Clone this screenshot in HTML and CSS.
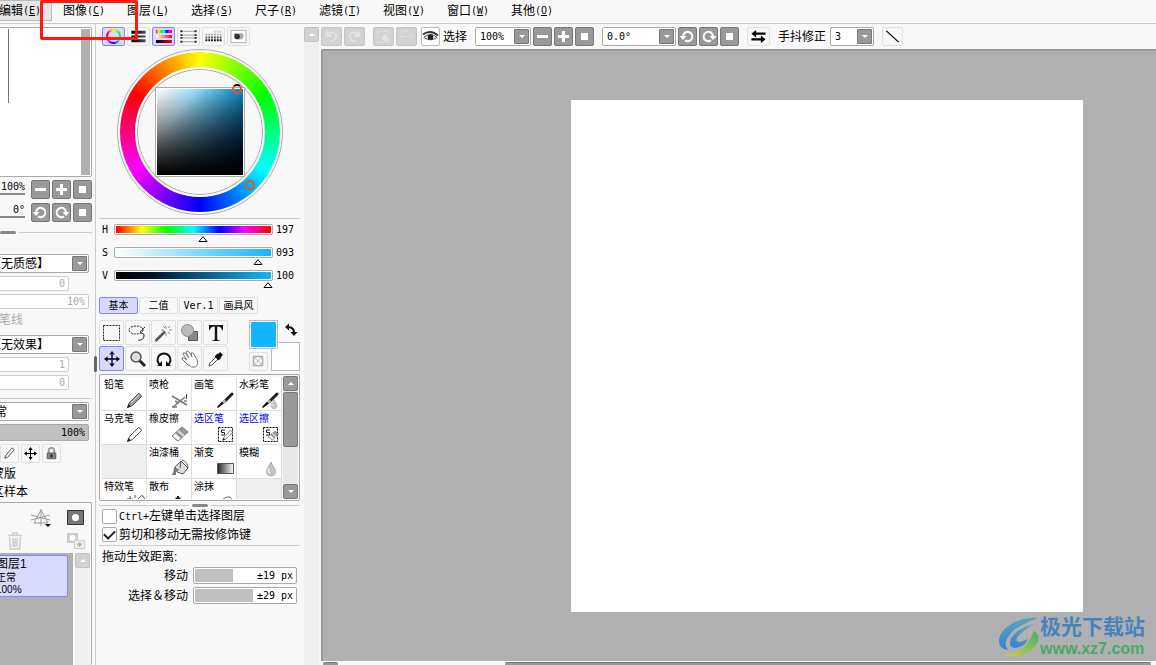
FILE: index.html
```html
<!DOCTYPE html>
<html lang="zh-CN">
<head>
<meta charset="utf-8">
<title>绘图软件</title>
<link rel="stylesheet" href="styles.css">
</head>
<body>
<svg class="defs" aria-hidden="true">
  <symbol id="i-minus" viewBox="0 0 17 17"><path d="M3 7h11v3H3z" fill="#fff"/></symbol>
  <symbol id="i-plus" viewBox="0 0 17 17"><path d="M3 7h4V3h3v4h4v3h-4v4H7v-4H3z" fill="#fff"/></symbol>
  <symbol id="i-square" viewBox="0 0 17 17"><path d="M5 5h7v7H5z" fill="#fff"/></symbol>
  <symbol id="i-cw" viewBox="0 0 17 17"><path d="M13 8.500A4.700 4.700 0 1 0 11 12.400" fill="none" stroke="#fff" stroke-width="2"/><path d="M9.500 8h7L13 12z" fill="#fff"/></symbol>
  <symbol id="i-ccw" viewBox="0 0 17 17"><path d="M4 8.500A4.700 4.700 0 1 1 6 12.400" fill="none" stroke="#fff" stroke-width="2"/><path d="M.5 8h7L4 12z" fill="#fff"/></symbol>
  <symbol id="i-move" viewBox="0 0 18 18"><path d="M9 2v14M2 9h14" stroke="currentColor" stroke-width="1.500"/><path d="M9 0l3 4H6zM9 18l3-4H6zM0 9l4-3v6zM18 9l-4-3v6z" fill="currentColor"/></symbol>
  <symbol id="i-brush" viewBox="0 0 20 20"><path d="M17 4L10 11" stroke="#222" stroke-width="3" stroke-linecap="round"/><path d="M10.500 10.500L8.500 12.500" stroke="#aaa" stroke-width="3"/><path d="M9 13.500L3 18l-1-1 5-5.500z" fill="#111"/></symbol>
  <symbol id="i-pencil" viewBox="0 0 20 20"><path d="M2.500 17.500l2-5 9-9q2 0 3 3l-9 9z" fill="#f4f4f4" stroke="#555"/><path d="M2 18l1.500-4 2.500 2.500z" fill="#222"/></symbol>
  <symbol id="i-lead" viewBox="0 0 20 20"><path d="M2.500 17.500l2-5 9-9q2 0 3 3l-9 9z" fill="#999" stroke="#555"/><path d="M6 13l8-8" stroke="#ddd"/><path d="M2 18l1.500-4 2.500 2.500z" fill="#222"/></symbol>
  <symbol id="i-eraser" viewBox="0 0 20 20"><path d="M2 12L12 3l6 5-10 9z" fill="#999" stroke="#777"/><path d="M2 12l3.500-3 6 5L8 17z" fill="#f5f5f5" stroke="#888"/><path d="M8 7l6 5" stroke="#ddd" stroke-width="2"/></symbol>
  <symbol id="i-drop" viewBox="0 0 20 20"><path d="M11 4c1 4 4.500 6 4.500 9.500a4.500 4.500 0 0 1-9 0c0-3.500 3.500-5.500 4.500-9.500z" fill="#c4c4c4" stroke="#aaa"/><path d="M9 10c-1 2-1 4 1 5" stroke="#eee" stroke-width="1.500" fill="none"/></symbol>
  <symbol id="i-sel" viewBox="0 0 20 20"><path d="M3.500 3.500h14v14h-14z" fill="none" stroke="#000" stroke-dasharray="2 1"/><path d="M10 6H6.500v2.500h3V11H6" fill="none" stroke="#222"/></symbol>
</svg>

<nav class="menubar">
  <button class="menu on">编辑<span class="la">(<u>E</u>)</span></button>
  <button class="menu">图像<span class="la">(<u>C</u>)</span></button>
  <button class="menu">图层<span class="la">(<u>L</u>)</span></button>
  <button class="menu">选择<span class="la">(<u>S</u>)</span></button>
  <button class="menu">尺子<span class="la">(<u>R</u>)</span></button>
  <button class="menu">滤镜<span class="la">(<u>T</u>)</span></button>
  <button class="menu">视图<span class="la">(<u>V</u>)</span></button>
  <button class="menu">窗口<span class="la">(<u>W</u>)</span></button>
  <button class="menu">其他<span class="la">(<u>O</u>)</span></button>
</nav>

<main class="workspace">
  <aside class="layers">
    <div class="layers-inner">
      <div class="navigator"><div class="nav-line"></div><div class="nav-shade"></div></div>
      <div class="nav-row"><span class="val">100%</span><button class="dk" aria-label="缩小"><svg><use href="#i-minus"/></svg></button><button class="dk" aria-label="放大"><svg><use href="#i-plus"/></svg></button><button class="dk" aria-label="重置"><svg><use href="#i-square"/></svg></button></div>
      <div class="nav-row"><span class="val">0°</span><button class="dk" aria-label="左转"><svg><use href="#i-ccw"/></svg></button><button class="dk" aria-label="右转"><svg><use href="#i-cw"/></svg></button><button class="dk" aria-label="重置角度"><svg><use href="#i-square"/></svg></button></div>
      <div class="grab left-grab"><i class="pill"></i><i class="rule"></i></div>
      <div class="group first">
        <label class="drop"><select class="deep" aria-label="质感"><option>【无质感】</option></select><i class="arrow"></i></label>
        <input class="num short" value="0" disabled aria-label="质感倍率">
        <input class="num" value="10%" disabled aria-label="质感强度">
        <span class="faint">笔线</span>
      </div>
      <div class="group">
        <label class="drop"><select class="deep" aria-label="效果"><option>【无效果】</option></select><i class="arrow"></i></label>
        <input class="num short" value="1" disabled aria-label="效果宽度">
        <input class="num short" value="0" disabled aria-label="效果强度">
      </div>
      <hr>
      <div class="group mode">
        <label class="drop"><select aria-label="模式"><option>正常</option></select><i class="arrow"></i></label>
        <input class="num full" value="100%" aria-label="不透明度">
      </div>
      <div class="locks">
        <button class="lt sq" aria-label="画笔"><svg viewBox="0 0 18 18"><path d="M4 14l1-3 7-8 2 2-7 8z" fill="#fff" stroke="#444"/></svg></button>
        <button class="lt sq" aria-label="移动"><svg class="small"><use href="#i-move"/></svg></button>
        <button class="lt sq" aria-label="锁定"><svg viewBox="0 0 18 18"><path d="M6 9V6a3 3 0 0 1 6 0v3" fill="none" stroke="#999" stroke-width="2"/><path d="M4.500 8.500h9v6h-9z" fill="#888" stroke="#555"/><path d="M9 10v3" stroke="#111" stroke-width="2"/></svg></button>
      </div>
      <div class="opt">蒙版</div>
      <div class="opt">区样本</div>
      <section class="layer-panel">
        <div class="layer-tools">
          <button class="bare" aria-label="透视尺"><svg width="20" height="20" viewBox="0 0 20 20"><path d="M10 1v17M0 7l19 5M19 7L0 12M10 2l-7 13 14 0z" fill="none" stroke="#999"/><path d="M14 16h6l-3 3z" fill="#000"/></svg></button>
          <button class="bare" aria-label="蒙版"><svg width="18" height="16" viewBox="0 0 18 16"><path d="M.5.5h16v14H.5z" fill="#777" stroke="#333"/><circle cx="8.500" cy="7.500" r="3.500" fill="#fff"/></svg></button>
        </div>
        <div class="layer-tools low">
          <button class="bare" aria-label="删除"><svg width="16" height="18" viewBox="0 0 16 18"><path d="M1 3.500h14M6 3V1h4v2M2.500 5l1 12h9l1-12M6 6v9M8 6v9M10 6v9" fill="none" stroke="#ccc" stroke-width="1.500"/></svg></button>
          <button class="bare" aria-label="应用蒙版"><svg width="20" height="18" viewBox="0 0 20 18"><path d="M1 1h11v10H1z" fill="#ccc"/><circle cx="6.500" cy="6" r="3" fill="#fff"/><path d="M8.500 8.500h10v8h-10z" fill="#f3f3f3" stroke="#ccc"/><path d="M13.500 10v5M11 12.500h5" stroke="#bbb" stroke-width="2"/></svg></button>
        </div>
        <div class="layer-list">
          <div class="list-body"><button class="layer"><b>图层1</b><span>正常</span><span>100%</span></button></div>
          <div class="track"><button class="sb pale up" aria-label="向上"></button></div>
        </div>
      </section>
    </div>
    <i class="handle"></i>
  </aside>

  <section class="tools">
    <div class="panel-tabs">
      <button class="lt on" aria-label="色环"><span class="hue-dot"></span></button>
      <button class="lt" aria-label="RGB滑块"><svg viewBox="0 0 21 18"><path d="M3 3h15v3H3zM3 8h15v2H3zM3 12h15v3H3z" fill="url(#gk)"/><defs><linearGradient id="gk"><stop offset="0"/><stop offset=".5" stop-color="#222"/><stop offset="1" stop-color="#555"/></linearGradient></defs></svg></button>
      <button class="lt on" aria-label="HSV滑块"><span class="hsv-icon"><i class="rainbow"></i><i class="wr"></i><i class="kr"></i></span></button>
      <button class="lt" aria-label="中间色"><svg viewBox="0 0 21 18"><path d="M2 3.500h17M2 7.500h17M2 10.500h17M2 14.500h17" stroke="#999"/><path d="M2 3.500h2M2 7.500h2M2 10.500h2M2 14.500h2M17 3.500h2M17 7.500h2M17 10.500h2M17 14.500h2" stroke="#222" stroke-width="2"/></svg></button>
      <button class="lt" aria-label="色板"><svg viewBox="0 0 21 18"><g stroke-dasharray="2 1" stroke-width="2"><path d="M11 4h8" stroke="#ccc"/><path d="M2 7h17" stroke="#aaa"/><path d="M2 10h17" stroke="#555"/><path d="M2 13h17" stroke="#111"/></g></svg></button>
      <button class="lt" aria-label="便签"><svg viewBox="0 0 21 18"><path d="M2.500 2.500h16v13h-16z" fill="#fff" stroke="#aaa"/><path d="M5 7q2-3 5-1 4-2 6 1 0 5-3 5-5 1-6-4z" fill="#aaa"/><circle cx="9" cy="9" r="3" fill="#333"/></svg></button>
    </div>
    <div class="wheel">
      <div class="hue"></div>
      <div class="hole"></div>
      <div class="sv"></div>
      <i class="mark m1"></i><i class="mark m2"></i>
    </div>
    <hr>
    <div class="sliders">
      <label class="slide"><span>H</span><input class="h" type="range" max="359" value="197"><output>197</output></label>
      <label class="slide"><span>S</span><input class="s" type="range" max="100" value="93"><output>093</output></label>
      <label class="slide"><span>V</span><input class="v" type="range" max="100" value="100"><output>100</output></label>
    </div>
    <div class="set-tabs">
      <button class="lt on">基本</button><button class="lt">二值</button><button class="lt la">Ver.1</button><button class="lt">画具风</button>
    </div>
    <div class="toolbox">
      <div class="tool-grid">
        <button class="lt" aria-label="矩形选区"><svg viewBox="0 0 22 22"><path d="M2.500 3.500h16v15h-16z" fill="none" stroke="#222" stroke-dasharray="2 1"/></svg></button>
        <button class="lt" aria-label="套索"><svg viewBox="0 0 22 22"><ellipse cx="9" cy="8" rx="7" ry="4" fill="none" stroke="#222" stroke-dasharray="2 1"/><path d="M18 5c-3 3-6 5-4 6s3 0 3 3-4 5-6 4" fill="none" stroke="#222"/></svg></button>
        <button class="lt" aria-label="魔棒"><svg viewBox="0 0 22 22"><path d="M2.500 19L12 9.500" stroke="#555" stroke-width="2.500"/><path d="M13 4v3M13 11v3M8 8h3M16 8h3M10 4l2 2M17 4l-2 2M17 12l-2-2" stroke="#888"/></svg></button>
        <button class="lt" aria-label="图形"><svg viewBox="0 0 22 22"><path d="M9.500 9.500h9v9h-9z" fill="#888" stroke="#555"/><circle cx="8.500" cy="8.500" r="6" fill="#bbb" stroke="#888"/></svg></button>
        <button class="lt" aria-label="文字"><svg viewBox="0 0 22 22"><path d="M4 3h14v5h-1q-.5-3-3-3.500h-1.800V17q0 1.500 2.800 1.500v.5H7v-.5q2.800 0 2.800-1.500V4.500H8Q5.500 5 5 8H4z" fill="#111"/></svg></button>
        <button class="lt on" aria-label="移动"><svg viewBox="0 0 22 22"><use href="#i-move" x="3" y="3" width="16" height="16"/></svg></button>
        <button class="lt" aria-label="缩放"><svg viewBox="0 0 22 22"><path d="M12 12l6 6" stroke="#222" stroke-width="3"/><circle cx="9" cy="9" r="5" fill="#ddd" stroke="#555" stroke-width="1.500"/></svg></button>
        <button class="lt" aria-label="旋转"><svg viewBox="0 0 22 22"><path d="M7 17A6.500 6.500 0 1 1 15 17" fill="none" stroke="#111" stroke-width="2"/><path d="M4 18h5v-5zM18 18h-5v-5z" fill="#111"/></svg></button>
        <button class="lt" aria-label="抓手"><svg viewBox="0 0 22 22"><path d="M9 17L3 11q0-2 2-1l3 2-4-6q0-2 2-1l4 5-3-6q1-2 3 0l3 5-1-4q2-1 3 1l3 6q2 5-2 7-4 1-6-2z" fill="#fff" stroke="#777"/></svg></button>
        <button class="lt" aria-label="吸管"><svg viewBox="0 0 22 22"><path d="M4 18l1-3 7-7 2 2-7 7z" fill="#fff" stroke="#555"/><path d="M11 7l4 4M13 9l3.500-3.500" stroke="#111" stroke-width="4"/></svg></button>
      </div>
      <div class="swatches">
        <button class="back" aria-label="背景色"></button>
        <button class="front" aria-label="前景色"></button>
        <button class="bare swap" aria-label="交换颜色"><svg width="14" height="14" viewBox="0 0 14 14"><path d="M4 4q6 0 6 6" fill="none" stroke="#111" stroke-width="2"/><path d="M1 4l4-3.500v7zM6.500 9h7L10 13z" fill="#111"/></svg></button>
        <button class="lt clear" aria-label="透明"><svg viewBox="0 0 18 18"><path d="M3.500 3.500h10v10h-10z" fill="#fff" stroke="#888"/><path d="M4 4h3v3H4zM10 4h3v3h-3zM7 7h3v3H7zM4 10h3v3H4zM10 10h3v3h-3z" fill="#ccc"/></svg></button>
      </div>
    </div>
    <div class="brushes">
      <div class="brush-grid">
        <button class="brush">铅笔<svg><use href="#i-lead"/></svg></button>
        <button class="brush">喷枪<svg viewBox="0 0 20 20"><path d="M2 6l15 9M3 17l12-10M5 11l4 2M2 17h5" fill="none" stroke="#777" stroke-width="1.500"/><path d="M16.500 4v5M14 11h3" stroke="#444"/></svg></button>
        <button class="brush">画笔<svg><use href="#i-brush"/></svg></button>
        <button class="brush">水彩笔<svg viewBox="0 0 20 20"><use href="#i-brush"/><use href="#i-drop" x="7" y="7" width="13" height="13"/></svg></button>
        <button class="brush">马克笔<svg><use href="#i-pencil"/></svg></button>
        <button class="brush">橡皮擦<svg><use href="#i-eraser"/></svg></button>
        <button class="brush blue">选区笔<svg viewBox="0 0 20 20"><use href="#i-sel"/><use href="#i-pencil" x="6" y="4" width="14" height="14"/></svg></button>
        <button class="brush blue">选区擦<svg viewBox="0 0 20 20"><use href="#i-sel"/><use href="#i-eraser" x="7" y="5" width="13" height="13"/></svg></button>
        <span class="brush none"></span>
        <button class="brush">油漆桶<svg viewBox="0 0 20 20"><path d="M5 9l6-6 7 7-5 6-6-2z" fill="#ddd" stroke="#555"/><path d="M11 3l-1 7M12 2q6 2 6 8" fill="none" stroke="#555"/><path d="M4 9l6 3-4 1v4H1q3-1 3-8z" fill="#777"/></svg></button>
        <button class="brush">渐变<svg viewBox="0 0 20 20"><defs><linearGradient id="gr"><stop offset="0" stop-color="#222"/><stop offset="1" stop-color="#fff"/></linearGradient></defs><path d="M2.500 5.500h16v10h-16z" fill="url(#gr)" stroke="#555"/></svg></button>
        <button class="brush">模糊<svg><use href="#i-drop"/></svg></button>
        <button class="brush">特效笔<svg viewBox="0 0 20 20"><use href="#i-pencil" x="3"/><path d="M5 4v6M2 7h6M10 3v3" stroke="#555"/></svg></button>
        <button class="brush">散布<svg viewBox="0 0 20 20"><path d="M8 4v5M5.500 6.500h5" stroke="#222" stroke-width="2"/><path d="M12 8h6v5h-6z" fill="#222"/></svg></button>
        <button class="brush">涂抹<svg viewBox="0 0 20 20"><path d="M4 12q5-8 11-7 4 3-2 7" fill="#fff" stroke="#666"/></svg></button>
        <span class="brush none"></span>
      </div>
      <div class="brush-scroll"><button class="sb up" aria-label="向上"></button><i class="thumb"></i><button class="sb down" aria-label="向下"></button></div>
    </div>
    <div class="grab"><i class="rule"></i><i class="pill"></i><i class="rule"></i></div>
    <div class="checks">
      <label><input type="checkbox"><span><span class="la">Ctrl+</span>左键单击选择图层</span></label>
      <label><input type="checkbox" checked><span>剪切和移动无需按修饰键</span></label>
    </div>
    <hr>
    <div class="drag">
      <p>拖动生效距离:</p>
      <label>移动<input class="px" value="±19 px" style="--fill:38px"></label>
      <label>选择＆移动<input class="px" value="±29 px" style="--fill:58px"></label>
    </div>
  </section>

  <div class="track side"><button class="sb pale up" aria-label="向上"></button></div>

  <section class="stage">
    <div class="toolbar">
      <button class="off" disabled aria-label="撤销"><svg viewBox="0 0 19 17"><path d="M5 7q5-5 9 0 1 4-3 6H8" fill="none" stroke="#e2e2e2" stroke-width="2"/><path d="M4 2v7h7z" fill="#e2e2e2"/></svg></button>
      <button class="off" disabled aria-label="重做"><svg viewBox="0 0 19 17"><path d="M14 7q-5-5-9 0-1 4 3 6h3" fill="none" stroke="#e2e2e2" stroke-width="2"/><path d="M15 2v7H8z" fill="#e2e2e2"/></svg></button>
      <button class="off gap5" disabled aria-label="取消选择"><svg viewBox="0 0 19 17"><path d="M3.500 3.500h11v11h-11z" fill="none" stroke="#e2e2e2" stroke-dasharray="2 1"/><path d="M7 10l4-4 4 6-3 2z" fill="#e2e2e2"/></svg></button>
      <button class="off" disabled aria-label="反选"><svg viewBox="0 0 19 17"><path d="M2 8.500h15M4 7q5-8 11 0M4 10q5 8 11 0" fill="none" stroke="#e2e2e2" stroke-dasharray="3 1"/></svg></button>
      <label class="eye"><button class="lt" aria-label="显示选区"><svg viewBox="0 0 18 18"><path d="M2 10q7-6 14 0-7 5-14 0z" fill="#fff" stroke="#444"/><circle cx="9" cy="9.500" r="3" fill="#222"/><path d="M1 7q8-6 16 1" fill="none" stroke="#333" stroke-width="2"/></svg></button>选择</label>
      <label class="drop zoom"><select aria-label="缩放"><option>100%</option></select><i class="arrow"></i></label>
      <div class="trio"><button class="dk" aria-label="缩小"><svg><use href="#i-minus"/></svg></button><button class="dk" aria-label="放大"><svg><use href="#i-plus"/></svg></button><button class="dk" aria-label="重置"><svg><use href="#i-square"/></svg></button></div>
      <label class="drop angle"><select aria-label="角度"><option>0.0°</option></select><i class="arrow"></i></label>
      <div class="trio"><button class="dk" aria-label="左转"><svg><use href="#i-ccw"/></svg></button><button class="dk" aria-label="右转"><svg><use href="#i-cw"/></svg></button><button class="dk" aria-label="重置角度"><svg><use href="#i-square"/></svg></button></div>
      <button class="lt flip" aria-label="翻转"><svg viewBox="0 0 21 18"><path d="M6 6h12M3 12h12" stroke="#000" stroke-width="2.500"/><path d="M3 6l5-4v8zM18 12l-5-4v8z" fill="#000"/></svg></button>
      <label class="stab">手抖修正<span class="drop"><select><option>3</option></select><i class="arrow"></i></span></label>
      <button class="lt line" aria-label="直线"><svg viewBox="0 0 19 18"><path d="M3 3l13 12" stroke="#000" stroke-width="1.300"/></svg></button>
    </div>
    <div class="canvas">
      <div class="paper"></div>
      <div class="brand">
        <svg width="42" height="40" viewBox="0 0 42 40"><defs><linearGradient id="b1" x2="0" y2="1"><stop offset="0" stop-color="#62a0b8"/><stop offset="1" stop-color="#2f86d4"/></linearGradient><linearGradient id="b2" x1="0" y1="1" x2="1" y2="0"><stop offset="0" stop-color="#d2cf45"/><stop offset="1" stop-color="#43b06a"/></linearGradient></defs><path d="M40 1C22-1 1 11 1 24q0 8 9 9-5-6 0-13C16 11 26 6 40 1z" fill="url(#b1)"/><path d="M36 7C24 10 13 17 12 25q-1 8 9 5 7-2 9-9-4 4-9 4-5-1 0-7 6-6 15-11z" fill="url(#b1)"/><path d="M36 14q8 5 2 14C31 39 16 41 5 38q14 0 22-9 6-7 9-15z" fill="url(#b2)"/></svg>
        <div><strong>极光下载站</strong><em>www.xz7.com</em></div>
      </div>
    </div>
    <div class="hscroll"><i class="hbtn"></i><i class="hthumb"></i></div>
  </section>
</main>
<div class="callout"></div>
</body>
</html>
```

FILE: styles.css
```css
* { box-sizing: border-box; }
body {
  margin: 0;
  height: 100vh;
  display: flex;
  flex-direction: column;
  overflow: hidden;
  background: #f8f8f8;
  color: #000;
  font: 12px/14px "Liberation Sans", "Noto Sans CJK SC", sans-serif;
}
button, input, select { font: inherit; color: inherit; margin: 0; padding: 0; }
button { display: flex; align-items: center; justify-content: center; flex: none; }
hr { margin: 0; border: 0; border-top: 1px solid #ccc; }
i, em { font-style: normal; }
.defs { position: absolute; width: 0; height: 0; }
.la, .val, .num, .px, output { font-family: "DejaVu Sans Mono", monospace; font-size: 10px; }

/* menu */
.menubar { display: flex; flex: none; height: 24px; margin-left: -12px; border-bottom: 1px solid #ccc; }
.menu { width: 64px; height: 21px; padding-top: 1px; border: 0; background: none; white-space: nowrap; }
.menu.on { background: #e6e6e6; border: 1px solid #bbb; }

/* shared controls */
.dk { width: 19px; height: 19px; background: #999; border: 1px solid #777; border-radius: 2px; }
.dk svg { width: 17px; height: 17px; }
.lt { background: #f8f8f8; border: 1px solid #e0e0e0; border-radius: 2px; }
.lt svg { width: 100%; height: 100%; }
.lt.on { background: #d8d8ff; border-color: #8484ff; }
.bare { border: 0; background: none; }
.drop { position: relative; display: block; }
.drop select {
  display: block;
  width: 100%;
  height: 19px;
  appearance: none;
  background: #fff;
  border: 1px solid #aaa;
  border-radius: 2px;
  padding-left: 10px;
}
.drop .arrow {
  position: absolute;
  right: 2px;
  top: 2px;
  width: 15px;
  height: 15px;
  display: grid;
  place-items: center;
  background: #999;
  border: 1px solid #777;
  border-radius: 1px;
  pointer-events: none;
}
.arrow::after { content: ""; border: 3px solid transparent; border-top-color: #fff; border-bottom: 0; }
.sb { width: 15px; height: 15px; background: #999; border: 1px solid #777; border-radius: 2px; }
.sb.pale { background: #d2d2d2; border-color: #c0c0c0; }
.sb::after { content: ""; border: 3px solid transparent; }
.sb.up::after { border-bottom-color: #fff; border-top: 0; }
.sb.down::after { border-top-color: #fff; border-bottom: 0; }
.track { width: 15px; background: #efefef; flex: none; }
.pill { width: 16px; height: 3px; border-radius: 2px; background: #888; }
.rule { flex: 1; height: 1px; background: #ccc; }
.grab { display: flex; align-items: center; gap: 3px; }

.workspace { flex: 1; display: flex; min-height: 0; }

/* layer column */
.layers {
  position: relative;
  width: 96px;
  flex: none;
  display: flex;
  justify-content: flex-end;
  border-right: 1px solid #ccc;
  clip-path: inset(0 -4px 0 0);
}
.layers-inner { width: 120px; flex: none; margin-right: 3px; padding-top: 3px; display: flex; flex-direction: column; }
.handle { position: absolute; right: -2px; top: 332px; width: 3px; height: 16px; border-radius: 2px; background: #666; }
.navigator { height: 150px; flex: none; display: flex; justify-content: space-between; background: #fff; border: 1px solid #aaa; border-radius: 2px; padding: 1px; }
.nav-line { width: 1px; height: 74px; margin-left: 34px; background: #777; }
.nav-shade { width: 9px; background: #b0b0b0; }
.nav-row { display: flex; justify-content: flex-end; gap: 2px; height: 19px; margin-top: 3px; }
.nav-row + .nav-row { margin-top: 4px; }
.nav-row .val { width: 40px; height: 15px; margin-right: 4px; border-bottom: 2px solid #888; text-align: right; }
.left-grab { padding-left: 28px; margin-top: 9px; }
.group { display: flex; flex-direction: column; gap: 3px; padding-right: 3px; }
.group.first { margin: 20px 0 7px; }
.drop .deep { padding-left: 16px; }
.num { height: 15px; width: 100%; background: #fff; border: 1px solid #ccc; border-radius: 2px; color: #aaa; text-align: right; padding-right: 3px; }
.num.short { width: 97px; }
.num.full { height: 17px; background: #c0c0c0; color: #000; border-color: #aaa; }
.faint { color: #aaa; line-height: 16px; padding-left: 27px; }
.layers hr { margin: 8px 0 3px; }
.locks { display: flex; gap: 2px; padding-left: 28px; margin: 3px 0 2px; }
.sq { width: 19px; height: 19px; }
.locks .small { width: 13px; height: 13px; }
.opt { height: 18px; line-height: 18px; padding-left: 20px; }
.layer-panel { flex: 1; min-height: 0; margin-top: 1px; display: flex; flex-direction: column; border: 1px solid #aaa; border-bottom: 0; border-radius: 2px; }
.layer-tools { display: flex; justify-content: space-between; height: 24px; margin: 3px 6px 0 58px; flex: none; }
.layer-tools.low { height: 22px; margin: 0 5px 1px 34px; }
.layer-list { flex: 1; display: flex; gap: 2px; min-height: 0; padding-right: 1px; }
.list-body { flex: 1; background: #b0b0b0; padding: 2px 5px 0 0; }
.layer { width: 100%; height: 42px; flex-direction: column; align-items: flex-start; background: #dadaff; border: 1px solid #8484ff; border-radius: 2px; padding-left: 22px; font-size: 10px; line-height: 12px; }
.layer b { font-weight: 400; font-size: 12px; line-height: 15px; }

/* colour and tool column */
.tools { width: 208px; flex: none; padding: 3px 4px 0 3px; }
.panel-tabs { display: flex; gap: 2px; padding-left: 3px; }
.panel-tabs .lt { width: 23px; height: 19px; }
.hue-dot { width: 15px; height: 15px; border-radius: 50%; background: radial-gradient(#d8d8ff 5px, transparent 6px), conic-gradient(yellow, lime, cyan, blue, magenta, red, yellow); }
.hsv-icon { display: grid; gap: 2px; width: 16px; }
.hsv-icon i { height: 3px; }
.rainbow { background: linear-gradient(90deg, red, yellow, lime, cyan, blue, magenta, red); }
.wr { background: linear-gradient(90deg, #fff, red); }
.kr { background: linear-gradient(90deg, #000, red); }
.wheel { position: relative; width: 166px; height: 166px; margin: 3px auto; border: 1px solid #aaa; border-radius: 50%; background: #fff; }
.hue { position: absolute; inset: 2px; border-radius: 50%; background: conic-gradient(yellow, lime, cyan, blue, magenta, red, yellow); }
.hole { position: absolute; inset: 17px; border-radius: 50%; border: 2px solid #fff; background: #f8f8f8; box-shadow: inset 0 0 0 1px #aaa; }
.sv {
  position: absolute;
  inset: 37px;
  border: 1px solid #aaa;
  padding: 1px;
  background:
    linear-gradient(to top, #000, transparent) content-box,
    linear-gradient(to top left, #002c 10%, #0014 50%, transparent 75%) content-box,
    linear-gradient(90deg, #fff, #12b7ff) content-box,
    #fff;
}
.mark { position: absolute; width: 10px; height: 10px; border: 2px solid #e8501c; border-radius: 50%; }
.m1 { left: 114px; top: 34px; border-top-color: #111; }
.m2 { left: 127px; top: 130px; }
.sliders { padding: 4px 3px 0; }
.slide { display: flex; align-items: flex-start; gap: 3px; height: 23px; font-family: "DejaVu Sans Mono", monospace; font-size: 10px; line-height: 13px; }
.slide span { width: 9px; }
.slide input { width: 159px; height: 11px; margin-top: 1px; appearance: none; background: none; }
.slide input::-webkit-slider-runnable-track { height: 11px; border: 1px solid #aaa; border-radius: 2px; padding: 1px; background: var(--g) content-box, #fff; }
.slide input::-webkit-slider-thumb {
  appearance: none;
  width: 10px;
  height: 6px;
  margin: 10px 0 0 2px;
  background: url("data:image/svg+xml,%3Csvg xmlns='http://www.w3.org/2000/svg' viewBox='0 0 10 6'%3E%3Cpath d='M5 .7L9 5.500H1z' fill='%23fff' stroke='%23000'/%3E%3C/svg%3E") no-repeat;
}
.h { --g: linear-gradient(90deg, red, yellow, lime, cyan, blue, magenta, red); }
.s { --g: linear-gradient(90deg, #fff, #12b7ff); }
.v { --g: linear-gradient(90deg, #000, #000c20 20%, #12b7ff); }
.set-tabs { display: flex; gap: 1px; margin: 5px 0 6px; }
.set-tabs .lt { width: 39px; height: 17px; font-size: 10px; line-height: 14px; }
.toolbox { display: flex; justify-content: space-between; }
.tool-grid { display: grid; grid-template-columns: repeat(5, 25px); grid-auto-rows: 25px; gap: 1px; }
.tool-grid svg { width: 22px; height: 22px; }
.swatches { position: relative; width: 51px; height: 51px; }
.front { position: absolute; left: 0; top: 0; width: 29px; height: 29px; background: #12b7ff; border: 1px solid #bbb; box-shadow: inset 0 0 0 1px #fff; }
.back { position: absolute; right: 0; bottom: 0; width: 29px; height: 29px; background: #fff; border: 1px solid #bbb; }
.swap { position: absolute; right: 2px; top: 3px; }
.clear { position: absolute; left: 0; bottom: 0; width: 19px; height: 19px; }
.brushes { display: flex; justify-content: space-between; height: 127px; margin-top: 3px; padding: 1px; border: 1px solid #aaa; border-radius: 2px; }
.brush-grid { display: grid; grid-template-columns: repeat(4, 45px); grid-auto-rows: 34px; overflow: hidden; margin: 1px 0 0 1px; }
.brush {
  position: relative;
  display: flex;
  align-items: flex-start;
  justify-content: flex-start;
  background: #fff;
  border: 0;
  border-right: 1px solid #ddd;
  border-bottom: 1px solid #ddd;
  padding: 2px 0 0 2px;
  font-size: 10px;
  line-height: 12px;
}
.brush svg { position: absolute; right: 1px; bottom: 0; width: 20px; height: 20px; }
.brush.none { background: #efefef; }
.blue { color: #00f; }
.brush-scroll { width: 15px; display: flex; flex-direction: column; gap: 1px; background: #e8e8e8; }
.thumb { height: 55px; background: #999; border: 1px solid #777; border-radius: 2px; }
.brush-scroll .down { margin-top: auto; }
.tools .grab { height: 3px; margin: 3px 0 2px; }
.checks { display: grid; gap: 3px; padding-left: 3px; margin-bottom: 3px; }
.checks label { display: flex; align-items: center; gap: 2px; height: 15px; }
.checks input { appearance: none; width: 15px; height: 15px; flex: none; background: #fff; border: 1px solid #aaa; border-radius: 2px; display: grid; place-items: center; }
.checks input:checked::after { content: ""; width: 9px; height: 5px; margin-bottom: 3px; border: solid #222; border-width: 0 0 2px 2px; transform: rotate(-45deg); }
.drag { padding: 4px 3px 0; }
.drag p { margin: 0 0 3px; }
.drag label { display: flex; align-items: center; justify-content: flex-end; gap: 5px; height: 17px; margin-bottom: 3px; }
.px { width: 104px; height: 17px; border: 1px solid #aaa; border-radius: 2px; padding: 0 3px 0 1px; text-align: right; background: linear-gradient(#c0c0c0, #c0c0c0) 1px 1px / var(--fill) 13px no-repeat, #fff; }

.side { margin: 3px 2px 0 0; }

/* drawing area */
.stage { flex: 1; min-width: 0; display: flex; flex-direction: column; }
.toolbar { display: flex; align-items: center; height: 25px; padding-right: 8px; gap: 2px; flex: none; }
.off { width: 21px; height: 19px; background: #d2d2d2; border: 1px solid #c4c4c4; border-radius: 2px; }
.off svg { width: 19px; height: 17px; }
.off.gap5 { margin-left: 6px; }
.eye { display: flex; align-items: center; gap: 3px; margin: 0 6px 0 2px; white-space: nowrap; }
.eye .lt { width: 19px; height: 19px; border-color: #bbb; background: #fff; }
.toolbar .drop select { padding-left: 4px; font-family: "DejaVu Sans Mono", monospace; font-size: 10px; }
.zoom { width: 56px; }
.trio { display: flex; gap: 2px; margin-right: 6px; }
.angle { width: 74px; }
.flip { width: 23px; height: 19px; }
.stab { display: flex; align-items: center; gap: 4px; margin: 0 6px; white-space: nowrap; }
.stab .drop { width: 44px; }
.line { width: 21px; height: 19px; }
.canvas { position: relative; flex: 1; min-height: 0; background: #b0b0b0; border: 2px solid #999; border-right: 0; border-bottom: 0; border-radius: 2px 0 0 0; overflow: hidden; }
.paper { position: absolute; left: 248px; top: 49px; width: 512px; height: 512px; background: #fff; }
.brand { position: absolute; right: 11px; bottom: 3px; display: flex; align-items: center; }
.brand div { display: flex; flex-direction: column; }
.brand strong { color: #4684bd; font-size: 21px; line-height: 24px; }
.brand em { color: #46aa68; font: bold 16px/19px "Liberation Sans", sans-serif; }
.hscroll { display: flex; justify-content: space-between; height: 4px; flex: none; padding: 1px 5px 0 2px; background: #f8f8f8; }
.hbtn { width: 15px; background: #999; border-top: 1px solid #777; border-radius: 2px 2px 0 0; }
.hthumb { width: 78%; background: #999; border-top: 1px solid #777; border-radius: 2px 2px 0 0; }

.callout { position: absolute; left: 40px; top: 0; width: 98px; height: 40px; border: 3px solid #ff1a10; border-radius: 2px; }
```
